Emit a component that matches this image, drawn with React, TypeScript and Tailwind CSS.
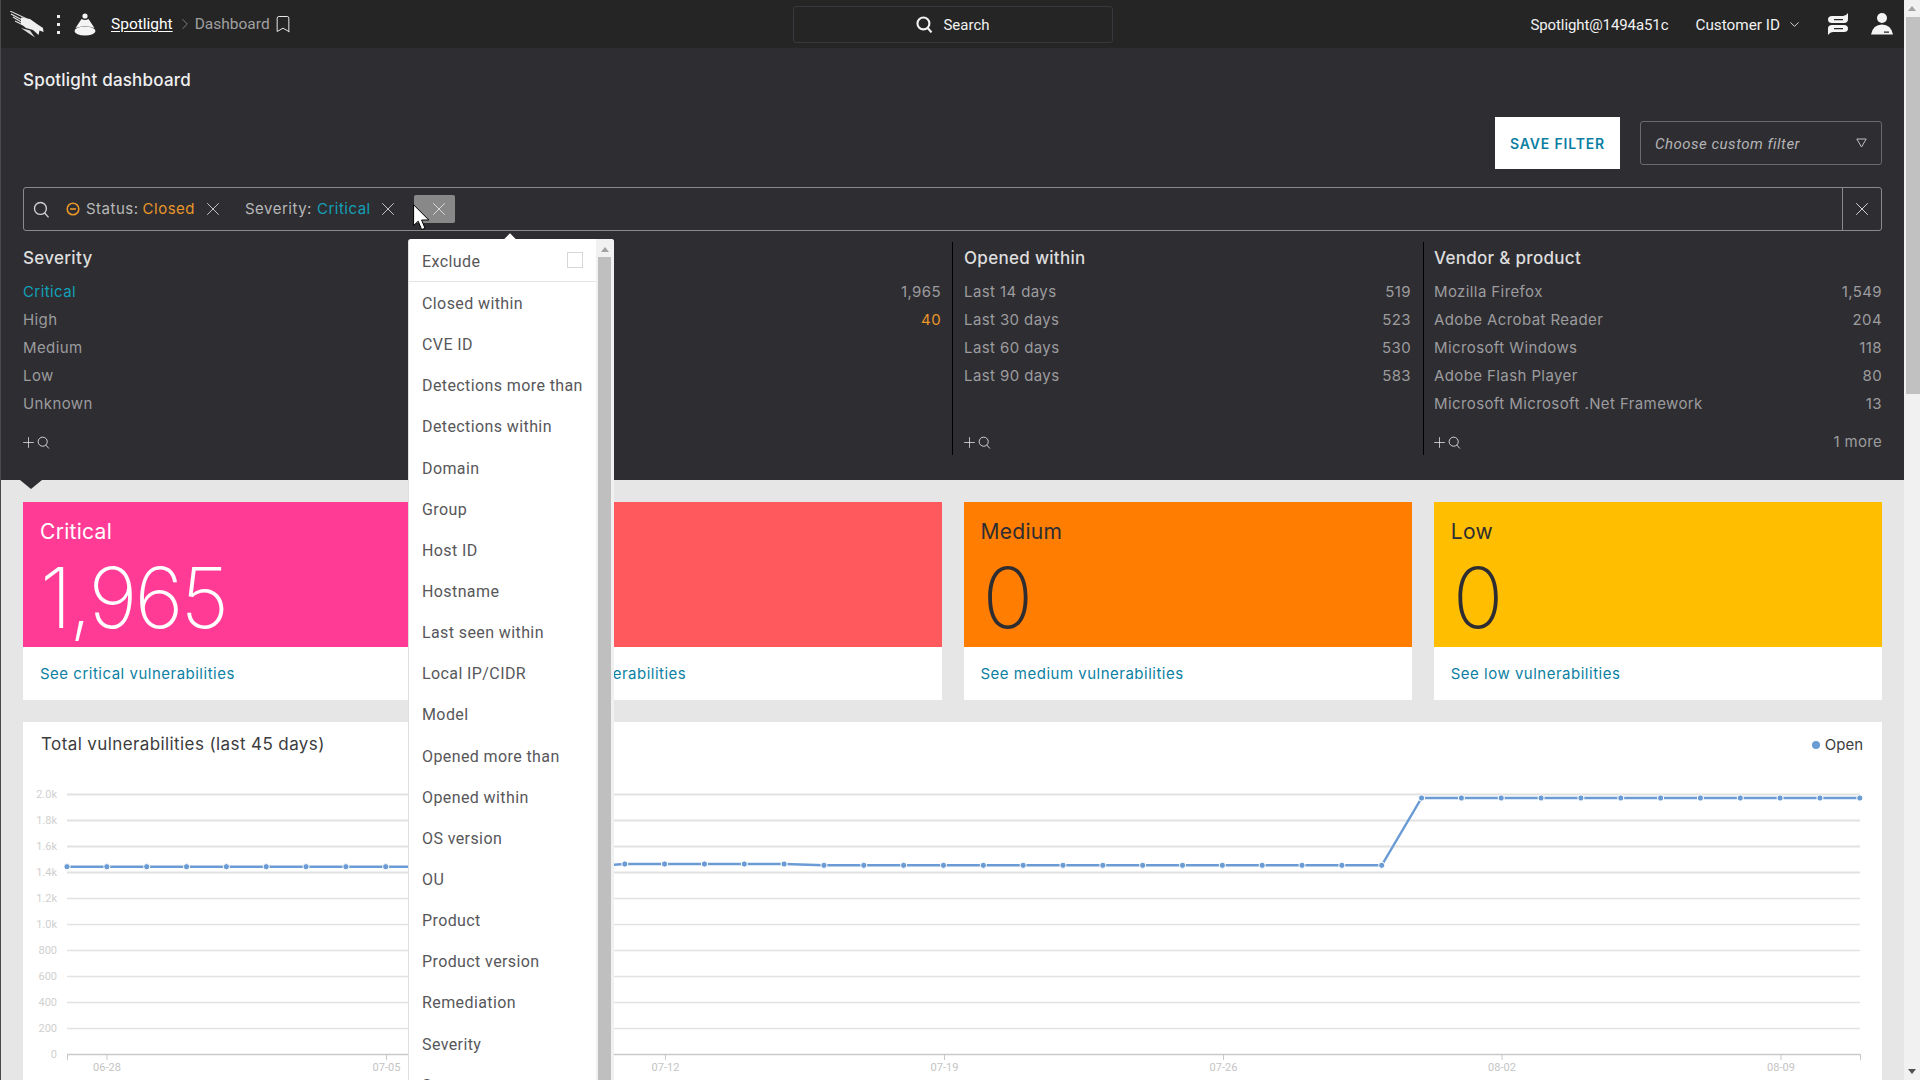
import React from 'react';
import { Bookmark, ChevronDown, ChevronRight, Plus, X } from 'lucide-react';

const facets = [
  {
    title: 'Severity',
    rows: [
      { label: 'Critical', count: '', active: 'text-[#12a0b8]' },
      { label: 'High', count: '' },
      { label: 'Medium', count: '' },
      { label: 'Low', count: '' },
      { label: 'Unknown', count: '' },
    ],
    more: '',
  },
  {
    title: 'Status',
    rows: [
      { label: 'Open', count: '1,965' },
      { label: 'Closed', count: '40', active: 'text-[#e8962a]' },
    ],
    more: '',
  },
  {
    title: 'Opened within',
    rows: [
      { label: 'Last 14 days', count: '519' },
      { label: 'Last 30 days', count: '523' },
      { label: 'Last 60 days', count: '530' },
      { label: 'Last 90 days', count: '583' },
    ],
    more: '',
  },
  {
    title: 'Vendor & product',
    rows: [
      { label: 'Mozilla Firefox', count: '1,549' },
      { label: 'Adobe Acrobat Reader', count: '204' },
      { label: 'Microsoft Windows', count: '118' },
      { label: 'Adobe Flash Player', count: '80' },
      { label: 'Microsoft Microsoft .Net Framework', count: '13' },
    ],
    more: '1 more',
  },
];

const facetClasses = [
  'pr-[12px]',
  'pl-[11px] pr-[11px] border-r border-black',
  'pl-[11px] pr-[12px] border-r border-black',
  'pl-[10px]',
];

const cards = [
  { label: 'Critical', value: '1,965', link: 'See critical vulnerabilities', bg: 'bg-[#ff3b96]', text: 'text-white', shift: '' },
  { label: 'High', value: '40', link: 'See high vulnerabilities', bg: 'bg-[#ff585d]', text: 'text-white', shift: '' },
  { label: 'Medium', value: '0', link: 'See medium vulnerabilities', bg: 'bg-[#ff7d00]', text: 'text-[#2e2d32]', shift: 'ml-[2px]' },
  { label: 'Low', value: '0', link: 'See low vulnerabilities', bg: 'bg-[#ffbe00]', text: 'text-[#2e2d32]', shift: 'ml-[2px]' },
];

const menuItems = [
  'Closed within',
  'CVE ID',
  'Detections more than',
  'Detections within',
  'Domain',
  'Group',
  'Host ID',
  'Hostname',
  'Last seen within',
  'Local IP/CIDR',
  'Model',
  'Opened more than',
  'Opened within',
  'OS version',
  'OU',
  'Product',
  'Product version',
  'Remediation',
  'Severity',
  'Status',
];

const yLabels = ['2.0k', '1.8k', '1.6k', '1.4k', '1.2k', '1.0k', '800', '600', '400', '200', '0'];
const xTicks = [
  { x: 107, label: '06-28' },
  { x: 386.5, label: '07-05' },
  { x: 665.5, label: '07-12' },
  { x: 944.5, label: '07-19' },
  { x: 1223.5, label: '07-26' },
  { x: 1502, label: '08-02' },
  { x: 1781, label: '08-09' },
];

// chart is 23px in from the page and starts at y=768
const points = Array.from({ length: 46 }, (_, i) => {
  let y = 866.7;
  if (i >= 14) y = 864;
  if (i >= 19) y = 865.3;
  if (i >= 34) y = 798;
  return { x: 67 + i * 39.84 - 23, y: y - 768 };
});

const Falcon = () => (
  <svg width="34" height="27" viewBox="0 0 34 27" fill="#f0f0f0" className="ml-[9px]">
    <path d="M0 0 L17 8 M1 3 L14 10 M3 6 L13 12 M5 10 L13 14" stroke="#e0e0e0" strokeWidth="1.1" fill="none" />
    <path d="M11 6.5 L20 8 L27 13 L33 17 L33.5 21 L29.5 19.5 L28.5 24 L23 19 L16 17 L11 13 Z" />
    <path d="M11 17 L20 19.5 L25 26.5 L19 22.5 Z" fill="#dcdcdc" />
  </svg>
);

const SpotlightIcon = () => (
  <svg width="22" height="23" viewBox="0 0 22 23" fill="#f4f4f4">
    <circle cx="11" cy="3" r="2.6" />
    <path d="M7.5 6 Q11 8 14.5 6 L20.5 15 Q11 11.5 1.5 15 Z" />
    <ellipse cx="11" cy="18" rx="10.5" ry="4.6" />
  </svg>
);

const Magnifier = ({ size = 16, width = 1.4 }: { size?: number; width?: number }) => (
  <svg width={size} height={size} viewBox="0 0 16 16" fill="none" stroke="currentColor" strokeWidth={width}>
    <circle cx="7" cy="7" r="5.6" />
    <path d="M10.8 11 L14.6 15.4" />
  </svg>
);

const FacetColumn = ({ facet, className }: { facet: (typeof facets)[number]; className: string }) => (
  <div className={`flex flex-col h-full ${className}`}>
    <div className="h-[32px] flex items-center pt-[2px] text-[17px] font-medium tracking-[0.3px] text-[#dedede]">{facet.title}</div>
    <div className="mt-[4px]">
      {facet.rows.map((row) => (
        <div key={row.label} className="h-[28px] flex items-center justify-between text-[15px] tracking-[0.4px] text-[#9c9c9e]">
          <span className={row.count === '' && row.active ? row.active : ''}>{row.label}</span>
          <span className={row.count !== '' && row.active ? row.active : ''}>{row.count}</span>
        </div>
      ))}
    </div>
    <div className="mt-auto h-[26px] flex items-center justify-between text-[15px] tracking-[0.3px] text-[#9c9c9e]">
      <div className="-ml-[3px] flex items-center text-[#e4e4e4]">
        <Plus size={17} strokeWidth={1.1} />
        <Magnifier size={13} width={1.1} />
      </div>
      <span className="pt-px">{facet.more}</span>
    </div>
  </div>
);

const VulnerabilityChart = () => (
  <svg width="1859" height="312" viewBox="0 0 1859 312" className="block" fontFamily="Roboto, sans-serif">
    {yLabels.map((label, i) => (
      <g key={label}>
        <text x="34" y={30 + i * 26} textAnchor="end" fontSize="11" fill="#cfcfcf">
          {label}
        </text>
        <line x1="44" x2="1837" y1={26.5 + i * 26} y2={26.5 + i * 26} stroke={i === 10 ? '#c9c9c9' : '#e2e2e2'} strokeWidth={i < 4 ? 2 : 1.3} />
      </g>
    ))}
    {[44.5, ...xTicks.map((t) => t.x - 23), 1837.5].map((x) => (
      <line key={x} x1={x} x2={x} y1="286" y2="292" stroke="#c9c9c9" />
    ))}
    {xTicks.map((t) => (
      <text key={t.label} x={t.x - 23} y="303" textAnchor="middle" fontSize="11" fill="#c4c4c4">
        {t.label}
      </text>
    ))}
    <polyline points={points.map((p) => `${p.x},${p.y}`).join(' ')} fill="none" stroke="#6a9bd4" strokeWidth="2.4" />
    {points.map((p) => (
      <circle key={p.x} cx={p.x} cy={p.y} r="3.1" fill="#6a9bd4" stroke="#ffffff" strokeWidth="1" />
    ))}
  </svg>
);

const App = () => {
  return (
    <div className="relative flex h-[1080px] w-[1920px] overflow-hidden font-[Inter,sans-serif]">
      <div className="flex w-[1904px] flex-col border-l border-[#4a4a4a]">
        <header className="grid h-[48px] shrink-0 grid-cols-[792px_320px_1fr] items-center bg-[#252525] font-[Roboto,sans-serif]">
          <div className="flex items-center">
            <Falcon />
            <div className="ml-[13px] flex flex-col gap-[5px]">
              <span className="h-[3px] w-[3px] bg-[#eeeeee]" />
              <span className="h-[3px] w-[3px] bg-[#eeeeee]" />
              <span className="h-[3px] w-[3px] bg-[#eeeeee]" />
            </div>
            <div className="ml-[14px]">
              <SpotlightIcon />
            </div>
            <span className="ml-[15px] pt-[2px] text-[15.5px] text-white underline underline-offset-2">Spotlight</span>
            <ChevronRight size={18} strokeWidth={1} className="ml-[3px] text-[#9a9a9a]" />
            <span className="ml-[1px] pt-[2px] text-[15.5px] text-[#a0a0a0]">Dashboard</span>
            <Bookmark size={20} strokeWidth={1.2} className="ml-[3px] text-[#e6e6e6]" />
          </div>
          <div className="flex h-[37px] items-center justify-center gap-[10px] rounded-[3px] border border-[#38373d] text-[15px] text-[#f2f2f2]">
            <Magnifier size={17} width={2} />
            <span className="pt-[2px]">Search</span>
          </div>
          <div className="flex items-center justify-end pr-[11px]">
            <span className="pt-[2px] text-[15px] tracking-[-0.1px] text-[#f2f2f2]">Spotlight@1494a51c</span>
            <span className="ml-[27px] pt-[2px] text-[15.3px] text-[#f2f2f2]">Customer ID</span>
            <ChevronDown size={15} strokeWidth={1.5} className="ml-[7px] text-[#e0e0e0]" />
            <svg width="20" height="22" viewBox="0 0 20 22" className="ml-[26px]">
              <path fill="#f4f4f4" fillRule="evenodd" d="M4 3 H15 Q18 3 20 0 V6 Q20 10 16 10 H4 Q0 10 0 6.5 Q0 3 4 3 Z M6 6 V7.2 H15 V6 Z" />
              <path fill="#f4f4f4" fillRule="evenodd" d="M4 12 H16 Q20 12 20 15.5 Q20 19 16 19 H5 Q2 19 0 22 V15.5 Q0 12 4 12 Z M6 15 V16.2 H15 V15 Z" />
            </svg>
            <svg width="22" height="22" viewBox="0 0 22 22" className="ml-[23px]">
              <circle cx="11" cy="5" r="5" fill="#f4f4f4" />
              <path fill="#f4f4f4" fillRule="evenodd" d="M0 21.5 Q2 11.5 11 11.5 Q20 11.5 22 21.5 Z M13 18.5 V19.7 H18 V18.5 Z" />
            </svg>
          </div>
        </header>

        <section className="flex h-[432px] shrink-0 flex-col bg-[#2e2d32] pl-[22px] pr-[22px] pt-[20px]">
          <h1 className="h-[24px] text-[17px] font-medium leading-[24px] tracking-[0.2px] text-[#f0f0f0]">Spotlight dashboard</h1>
          <div className="mt-[25px] flex h-[52px] items-center justify-end gap-[20px]">
            <button className="h-[52px] w-[125px] bg-white text-[14px] font-semibold tracking-[0.85px] text-[#0c7fa3]">SAVE FILTER</button>
            <div className="flex h-[44px] w-[242px] items-center justify-between rounded-[3px] border border-[#6a6a6e] pl-[14px] pr-[14px] font-[Roboto,sans-serif] text-[15px] italic tracking-[0.5px] text-[#b4b4b4]">
              <span className="pt-[3px]">Choose custom filter</span>
              <svg width="11" height="10" viewBox="0 0 11 10" fill="none" stroke="#c0c0c0">
                <path d="M0.8 1 H10.2 L5.5 9 Z" />
              </svg>
            </div>
          </div>
          <div className="mt-[18px] flex h-[44px] items-center rounded-[3px] border border-[#8a8a8c] text-[15px] tracking-[0.5px] text-[#b8b8b8]">
            <div className="ml-[9px] text-[#d0d0d0]">
              <Magnifier size={17} width={1.3} />
            </div>
            <svg width="14" height="14" viewBox="0 0 14 14" fill="none" stroke="#e8962a" strokeWidth="1.6" className="ml-[16px]">
              <circle cx="7" cy="7" r="5.8" />
              <path d="M4 7 H10" />
            </svg>
            <span className="ml-[6px] pt-px">Status:</span>
            <span className="ml-[4px] pt-px text-[#e8962a]">Closed</span>
            <X size={22} strokeWidth={1} className="ml-[7px] text-[#d0d0d0]" />
            <span className="ml-[21px] pt-px">Severity:</span>
            <span className="ml-[5px] pt-px text-[#12a0b8]">Critical</span>
            <X size={22} strokeWidth={1} className="ml-[6px] text-[#d0d0d0]" />
            <div className="ml-[15px] flex h-[28px] w-[41px] items-center justify-end rounded-[2px] bg-[#888888] pr-[5px]">
              <X size={22} strokeWidth={1} className="text-[#e0e0e0]" />
            </div>
            <div className="ml-auto flex h-full w-[39px] items-center justify-center border-l border-[#8a8a8c]">
              <X size={22} strokeWidth={1} className="text-[#e0e0e0]" />
            </div>
          </div>
          <div className="mt-[11px] grid h-[213px] grid-cols-[459px_471px_471px_1fr]">
            {facets.map((facet, i) => (
              <FacetColumn key={facet.title} facet={facet} className={facetClasses[i]} />
            ))}
          </div>
        </section>

        <main className="relative flex min-h-0 flex-1 flex-col bg-[#e6e6e6] pl-[22px] pr-[22px] pt-[22px]">
          <div className="absolute left-[19px] top-0 h-0 w-0 border-x-[11px] border-t-[9px] border-x-transparent border-t-[#2e2d32]" />
          <div className="grid grid-cols-4 gap-[22px]">
            {cards.map((card) => (
              <div key={card.label} className="bg-white">
                <div className={`h-[145px] px-[17px] pt-[18px] ${card.bg} ${card.text}`}>
                  <div className="text-[21px] leading-[24px] tracking-[0.3px]">{card.label}</div>
                  <div className={`mt-[12px] text-[84px] font-extralight leading-[84px] tracking-[-3px] ${card.shift}`}>{card.value}</div>
                </div>
                <div className="flex h-[53px] items-center px-[17px] pt-[2px] text-[15px] tracking-[0.5px] text-[#0c7fa3]">{card.link}</div>
              </div>
            ))}
          </div>
          <div className="mt-[22px] min-h-0 flex-1 overflow-hidden bg-white">
            <div className="flex h-[46px] items-center justify-between pl-[18px] pr-[19px]">
              <span className="text-[17px] tracking-[0.4px] text-[#3c3c3e]">Total vulnerabilities (last 45 days)</span>
              <div className="flex items-center gap-[5px] text-[15px] text-[#3c3c3e]">
                <span className="h-[8px] w-[8px] rounded-full bg-[#6a9bd4]" />
                <span>Open</span>
              </div>
            </div>
            <VulnerabilityChart />
          </div>
        </main>
      </div>

      <div className="relative w-[16px] shrink-0 bg-[#f1f1f1]">
        <div className="absolute left-[4px] top-[6px] h-0 w-0 border-x-[4px] border-b-[5px] border-x-transparent border-b-[#a3a3a3]" />
        <div className="absolute left-[2px] right-0 top-[17px] h-[377px] bg-[#c1c1c1]" />
        <div className="absolute bottom-[6px] left-[4px] h-0 w-0 border-x-[4px] border-t-[5px] border-x-transparent border-t-[#505050]" />
      </div>

      {/* filter key menu, sits over the facets and cards */}
      <div className="absolute left-[506px] top-[235px] h-[8px] w-[8px] rotate-45 bg-white" />
      <div className="absolute bottom-0 left-[408px] top-[239px] flex w-[206px] overflow-hidden rounded-t-[3px] border-l border-[#e0e0e0] bg-white font-[Roboto,sans-serif] text-[16px] tracking-[0.4px] text-[#57575a]">
        <div className="w-[187px]">
          <div className="flex h-[43px] items-center justify-between border-b border-[#e4e4e4] pl-[13px] pr-[13px]">
            <span className="pt-[3px]">Exclude</span>
            <span className="h-[16px] w-[16px] border border-[#d8d8d8]" />
          </div>
          {menuItems.map((item) => (
            <div key={item} className="flex h-[41.15px] items-center pl-[13px] pt-[3px]">
              {item}
            </div>
          ))}
        </div>
        <div className="relative w-[18px] bg-[#f1f1f1]">
          <div className="absolute left-[5px] top-[8px] h-0 w-0 border-x-[4px] border-b-[5px] border-x-transparent border-b-[#a3a3a3]" />
          <div className="absolute bottom-0 left-[2px] top-[18px] w-[13px] bg-[#bfbfbf]" />
        </div>
      </div>

      {/* mouse cursor */}
      <svg width="18" height="27" viewBox="0 0 18 27" className="absolute left-[413px] top-[204px]">
        <path d="M0.6 0.8 V21.5 L5.2 17.2 L8.6 25.6 L12 24.2 L8.6 16 H15.8 Z" fill="#ffffff" stroke="#000000" strokeWidth="1" />
      </svg>
    </div>
  );
};

export default App;
